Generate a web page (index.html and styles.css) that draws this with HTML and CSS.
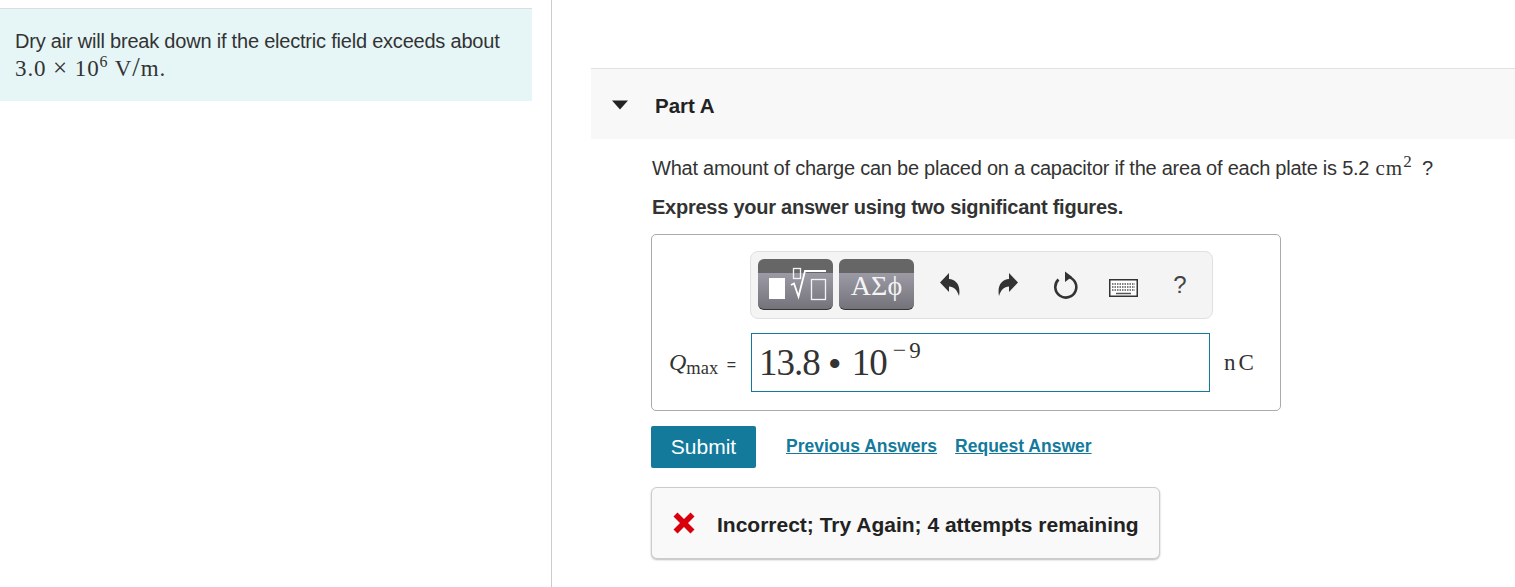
FILE: index.html
```html
<!DOCTYPE html>
<html lang="en">
<head>
<meta charset="utf-8">
<title>Part A</title>
<link rel="stylesheet" href="styles.css">
</head>
<body>
<div class="page">
  <aside class="left">
    <div class="callout">
      <p class="callout-line">Dry air will break down if the electric field exceeds about</p>
      <p class="callout-math">3.0 <span class="times">×</span> 10<sup>6</sup> V<span class="slash">/</span>m.</p>
    </div>
  </aside>
  <main class="right">
    <header class="part-head">
      <svg class="caret" width="16" height="10" viewBox="0 0 16 10"><path d="M0 0.500H16L8 9.500Z" fill="#222"/></svg>
      <h2 class="part-title">Part A</h2>
    </header>
    <section class="part-body">
      <p class="question">What amount of charge can be placed on a capacitor if the area of each plate is 5.2 <span class="unit">cm<sup>2</sup></span> <span class="qmark">?</span></p>
      <p class="instruct">Express your answer using two significant figures.</p>
      <div class="answer-box">
        <div class="toolbar">
          <div class="tool-btn">
            <svg width="75" height="51" viewBox="0 0 75 51">
              <rect x="11" y="19" width="16" height="21" fill="#fff"/>
              <rect x="35.500" y="9.500" width="7" height="10" fill="none" stroke="#f4f4f4" stroke-width="1.300"/>
              <path d="M33 26l3 -1.500 4.500 13 6.500 -25.500H68" fill="none" stroke="#fff" stroke-width="1.800"/>
              <rect x="53.500" y="20.500" width="14" height="20" fill="none" stroke="#f4f4f4" stroke-width="1.300"/>
            </svg>
          </div>
          <div class="tool-btn tool-greek">ΑΣϕ</div>
          <div class="tool-icons">
            <span class="tool-cell"><svg width="20" height="23" viewBox="0 0 20 23"><path d="M0 9.500L9 0V6C16 6.500 21 12 19 23C17 17 14 13.500 9 13.500V19Z" fill="#333"/></svg></span>
            <span class="tool-cell"><svg width="20" height="23" viewBox="0 0 20 23"><path d="M20 9.500L11 0V6C4 6.500 -1 12 1 23C3 17 6 13.500 11 13.500V19Z" fill="#333"/></svg></span>
            <span class="tool-cell"><svg width="26" height="28" viewBox="0 0 26 28"><path d="M14.500 5.700A10.500 10.500 0 1 1 5.500 8.500" fill="none" stroke="#333" stroke-width="2.600"/><path d="M12 0.500L19 5.800L12 11Z" fill="#333"/></svg></span>
            <span class="tool-cell tool-cell-tight"><svg class="kbd" width="29" height="18" viewBox="0 0 29 18"><rect x="0.750" y="0.750" width="27.500" height="16.500" fill="#fff" stroke="#333" stroke-width="1.500"/><path d="M3 5H26M3 8H26M3 11H26" stroke="#555" stroke-width="1.500" stroke-dasharray="1.500 1"/><path d="M7 14.500H22" stroke="#555" stroke-width="1.500"/></svg></span>
            <span class="tool-cell tool-cell-tight help">?</span>
          </div>
        </div>
        <div class="answer-row">
          <div class="label"><i class="q">Q</i><span class="sub">max</span> <span class="eq">=</span></div>
          <div class="input">13.8<span class="dot">•</span>10<span class="power"><span class="minus">−</span>9</span></div>
          <div class="units">nC</div>
        </div>
      </div>
      <div class="actions">
        <button class="submit" type="button">Submit</button>
        <a class="link" href="#">Previous Answers</a>
        <a class="link" href="#">Request Answer</a>
      </div>
      <div class="feedback">
        <svg width="22" height="22" viewBox="0 0 22 22"><path d="M4.500 0.500L11 7L17.500 0.500L21.500 4.500L15 11L21.500 17.500L17.500 21.500L11 15L4.500 21.500L0.500 17.500L7 11L0.500 4.500Z" fill="#d9000d"/></svg>
        <span class="feedback-text">Incorrect; Try Again; 4 attempts remaining</span>
      </div>
    </section>
  </main>
</div>
</body>
</html>
```

FILE: styles.css
```css
* { box-sizing: border-box; }
html, body { margin: 0; padding: 0; background: #fff; height: 100%; overflow: hidden; }
body { font-family: "Liberation Sans", Arial, sans-serif; color: #333; }
p, h2 { margin: 0; }

.page { display: flex; height: 587px; }

.left { width: 552px; flex: none; padding-top: 8px; border-right: 1px solid #ccc; }
.callout {
  width: 532px; height: 93px; padding: 19px 15px 0;
  background: #e6f6f7; border-top: 1px solid #ddd;
}
.callout-line { font-size: 20px; line-height: 26px; letter-spacing: -0.21px; }
.callout-math { font-family: "Liberation Serif", serif; font-size: 23px; line-height: 26px; letter-spacing: .9px; }
.callout-math sup { font-size: 16px; line-height: 0; }
.times { font-size: 25px; line-height: 0; }
.slash { font-size: 27px; }

.right { flex: 1; min-width: 0; padding: 68px 0 0 39px; }
.part-head {
  display: flex; align-items: center; height: 71px;
  padding-left: 21px; background: #f8f8f8; border-top: 1px solid #e2e2e2;
}
.caret { flex: none; margin: 2px 27px 0 0; }
.part-title { font-size: 20.500px; font-weight: 700; color: #222; line-height: 24px; margin-top: 3px; }

.part-body { padding: 14px 0 0 61px; }
.question { font-size: 20px; line-height: 30px; letter-spacing: -0.24px; white-space: nowrap; }
.unit { font-family: "Liberation Serif", serif; font-size: 21px; letter-spacing: 1px; margin-left: 1px; }
.unit sup { font-size: 17px; line-height: 0; }
.qmark { margin-left: 4px; }
.instruct { margin-top: 10px; font-size: 20px; font-weight: 700; line-height: 28px; letter-spacing: -0.25px; }

.answer-box {
  width: 630px; height: 177px; margin: 13px 0 0 -1px; padding: 16px 0 0 98px;
  border: 1px solid #aaa; border-radius: 5px;
}
.toolbar {
  display: flex; align-items: flex-start; gap: 6px; width: 463px; height: 68px; padding: 7px 7px 0;
  background: #f4f4f4; border: 1px solid #e0e0e0; border-radius: 8px;
}
.tool-btn {
  width: 75px; height: 51px; flex: none; border-radius: 6px; overflow: hidden;
  background: linear-gradient(#666 0, #666 14px, #9c9aa5 14px, #74737a 100%);
  border-bottom: 1px solid #333;
}
.tool-btn svg { display: block; }
.tool-greek {
  display: flex; align-items: center; justify-content: center; padding-top: 3px;
  font-family: "Liberation Serif", serif; font-size: 28px; color: #f4f4f4;
}
.tool-icons { display: flex; align-items: center; height: 51px; padding-left: 1px; }
.tool-cell { display: flex; align-items: center; justify-content: center; width: 58px; flex: none; }
.tool-cell-tight { margin-left: -1px; }
.tool-cell svg { display: block; }
.kbd { margin-top: 7px; }
.help { font-size: 24px; color: #444; }

.answer-row { display: flex; align-items: center; height: 59px; margin-top: 14px; margin-left: -98px; }
.label { width: 99px; flex: none; padding-left: 17px; font-family: "Liberation Serif", serif; font-size: 18px; white-space: nowrap; }
.q { font-size: 24px; }
.sub { font-size: 18.500px; position: relative; top: 4px; }
.eq { font-family: "Liberation Sans", sans-serif; font-size: 16px; margin-left: 4px; }
.input {
  display: flex; align-items: flex-start;
  width: 459px; height: 59px; flex: none; padding: 6px 0 0 7px;
  border: 1px solid #14799c; font-family: "Liberation Serif", serif; font-size: 37px; line-height: 46px; letter-spacing: -1px; white-space: nowrap;
}
.dot { font-family: "Liberation Sans", sans-serif; font-size: 34px; margin: 0 12px 0 9px; }
.power { font-size: 23px; line-height: 26px; letter-spacing: 0; margin: -3px 0 0 6px; }
.minus { margin-right: 3px; font-size: 24px; }
.units { margin-left: 14px; font-family: "Liberation Serif", serif; font-size: 23px; letter-spacing: 3px; color: #333; }

.actions { display: flex; align-items: center; margin: 15px 0 0 -1px; }
.submit {
  width: 105px; height: 42px; padding: 0; border: 0; border-radius: 2px;
  background: #137a9c; color: #fff; font: 21px "Liberation Sans", sans-serif; margin-right: 30px;
}
.link { font-size: 17.500px; font-weight: 700; color: #137a9c; margin-right: 18px; margin-top: -2px; }

.feedback {
  display: flex; align-items: center; gap: 22px; width: 509px; height: 72px; margin: 19px 0 0 -1px; padding: 0 0 0 21px;
  background: #f9f9f9; border: 1px solid #ccc; border-radius: 6px; box-shadow: 0 1px 2px #bbb;
}
.feedback svg { flex: none; }
.feedback-text { font-size: 21px; font-weight: 700; color: #222; white-space: nowrap; padding-top: 4px; }
```
